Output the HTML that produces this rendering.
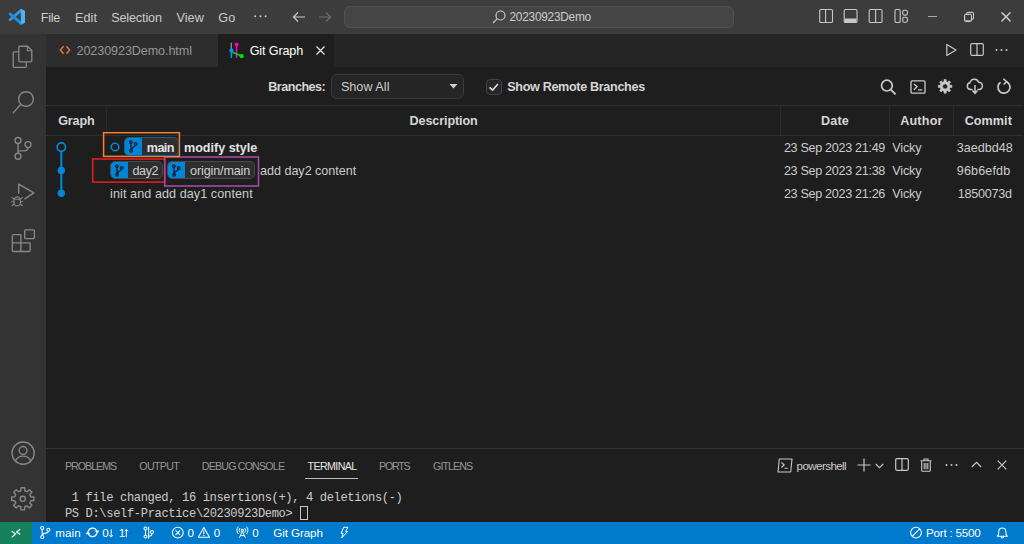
<!DOCTYPE html>
<html><head><meta charset="utf-8">
<style>
*{box-sizing:border-box;margin:0;padding:0}
html,body{width:1024px;height:544px;overflow:hidden;background:#1e1e1e;font-family:"Liberation Sans",sans-serif;color:#ccc;font-size:13px}
.abs{position:absolute}
.x{position:absolute;white-space:pre;line-height:1}
#title{left:0;top:0;width:1024px;height:34px;background:#3c3c3c}
#act{left:0;top:34px;width:46px;height:488px;background:#333333}
#tabs{left:46px;top:34px;width:978px;height:33px;background:#252526}
.tab{position:absolute;top:0;height:33px;font-size:13px;line-height:33px;white-space:nowrap}
#status{left:0;top:522px;width:1024px;height:22px;background:#007acc;color:#fff;font-size:12px;line-height:22px}
#remote{left:0;top:0;width:32px;height:22px;background:#16825d}
.t{position:absolute;white-space:nowrap}
.menu{position:absolute;top:0;line-height:35px;font-size:13px;color:#cccccc}
.b{font-weight:bold}
.hdr{position:absolute;top:109px;height:26px;line-height:25px;font-weight:bold;color:#d8d8d8;font-size:13px;text-align:center}
.row{position:absolute;font-size:13px;color:#cccccc;white-space:nowrap;line-height:23px;height:23px}
.ref{position:absolute;height:18px;border:1px solid #4a4a4a;border-radius:5px;background:#2e2e2e;overflow:hidden}
.ref .ic{position:absolute;left:0;top:0;width:17px;height:18px;background:#0085d9}
.ref .nm{position:absolute;left:22px;top:0;line-height:16px;font-size:13px;color:#d4d4d4;white-space:nowrap}
.pt{position:absolute;top:454px;line-height:24px;font-size:11px;color:#969696;white-space:nowrap}
.mono{font-family:"Liberation Mono",monospace;font-size:13.2px;color:#cccccc;white-space:pre;position:absolute;line-height:16px}
</style></head><body>

<!-- TITLE BAR -->
<div id="title" class="abs">
  <svg class="abs" style="left:0;top:0" width="34" height="34" viewBox="0 0 34 34"><path d="M10.100 19.700 21.200 10.200" stroke="#2c9bea" stroke-width="2.800" stroke-linecap="round"/><path d="M10.100 13.900 21.200 23.400" stroke="#1f8fde" stroke-width="2.800" stroke-linecap="round"/><path d="M20.700 8.800 24.300 10.700a1 1 0 0 1 .7 1V22a1 1 0 0 1-.7 1L20.700 24.800z" fill="#43a8f2"/><path d="M21.800 9.600 24.300 10.700a1 1 0 0 1 .7 1V22a1 1 0 0 1-.7 1L21.800 24.100z" fill="#54b2f6"/></svg>
  
  
  
  
  
  
  <svg class="abs" style="left:253px;top:14px" width="15" height="4" viewBox="0 0 15 4" fill="#cccccc"><circle cx="2.200" cy="2.200" r="1"/><circle cx="7.400" cy="2.200" r="1"/><circle cx="12.600" cy="2.200" r="1"/></svg>
  <svg class="abs" style="left:291px;top:9px" width="16" height="16" viewBox="0 0 16 16"><path d="M14 8H2.5M7 3.5 2.5 8 7 12.5" stroke="#ccc" stroke-width="1.2" fill="none"/></svg>
  <svg class="abs" style="left:317px;top:9px" width="16" height="16" viewBox="0 0 16 16"><path d="M2 8h11.5M9 3.5 13.5 8 9 12.5" stroke="#6e6e6e" stroke-width="1.2" fill="none"/></svg>
  <div class="abs" style="left:344px;top:6px;width:390px;height:22px;border:1px solid #525252;border-radius:6px;background:#454545"></div>
  <svg class="abs" style="left:491px;top:9px" width="16" height="16" viewBox="0 0 16 16"><circle cx="9.5" cy="6.5" r="4.5" stroke="#ccc" stroke-width="1.2" fill="none"/><path d="M6.3 9.7 2 14" stroke="#ccc" stroke-width="1.2"/></svg>
  
  <!-- layout icons -->
  <svg class="abs" style="left:800px;top:0" width="224" height="34" viewBox="800 0 224 34" fill="none" stroke="#c8c8c8" stroke-width="1.100">
  <rect x="819.700" y="9.500" width="12.800" height="13" rx="1.300"/><path d="M825.600 9.500v13"/>
  <rect x="844.200" y="9.500" width="12.800" height="13" rx="1.300"/><path d="M844.700 18.500h11.800v3.500h-11.800z" fill="#c8c8c8" stroke="none"/>
  <rect x="869.200" y="9.500" width="12.800" height="13" rx="1.300"/><path d="M875.600 9.500v13"/>
  <rect x="895" y="9.500" width="5.200" height="13" rx="1.300"/><rect x="902.700" y="10.200" width="4.700" height="4.900" rx="1.500"/><rect x="902.700" y="17.300" width="4.700" height="4.900" rx="1.500"/>
  <path d="M928 16.500h9" stroke="#b4b4b4" stroke-width="0.900"/>
  <g stroke="#b4b4b4" stroke-width="0.900"><rect x="964.800" y="14.200" width="6.600" height="6.300" rx="1"/><path d="M966.800 14v-0.700a1 1 0 0 1 1-1h4.700a1 1 0 0 1 1 1v4.400a1 1 0 0 1-1 1h-0.900"/></g>
  <path d="M1002 12.300l8.200 8.300M1010.200 12.300l-8.200 8.300" stroke="#d0d0d0" stroke-width="0.950"/>
  </svg>
</div>
  <svg class="abs" style="left:963px;top:11px" width="12" height="12" viewBox="0 0 12 12"><rect x="1.500" y="3.500" width="7" height="7" rx="1" stroke="#ccc" fill="none"/><path d="M3.500 3.500v-1a1 1 0 0 1 1-1h5a1 1 0 0 1 1 1v5a1 1 0 0 1-1 1h-1" stroke="#ccc" fill="none"/></svg>
  <svg class="abs" style="left:1000px;top:11px" width="12" height="12" viewBox="0 0 12 12"><path d="M1.500 1.500l9 9M10.500 1.500l-9 9" stroke="#ccc" stroke-width="1.100"/></svg>
</div>

<!-- ACTIVITY BAR -->
<div id="act" class="abs"></div>
<svg class="abs" style="left:0;top:34px" width="46" height="488" viewBox="0 34 46 488" fill="none" stroke="#888888" stroke-width="1.350" stroke-linejoin="round" stroke-linecap="butt">
<!-- files -->
<path d="M18.400 51.800H14.200a1 1 0 0 0-1 1V66.300a1 1 0 0 0 1 1H25.300a1 1 0 0 0 1-1V62.200"/>
<path d="M19.800 46.200H27.600L31.800 50.500V60.800a1 1 0 0 1-1 1H19.800a1 1 0 0 1-1-1V47.200a1 1 0 0 1 1-1z"/>
<path d="M27.400 46.400V50.700H31.600" stroke-width="1.100"/>
<!-- search -->
<circle cx="26" cy="99" r="7.300"/><path d="M20.600 104.500 12.900 113.400"/>
<!-- scm -->
<circle cx="18" cy="140.500" r="3"/><circle cx="18" cy="156.200" r="3"/><circle cx="28" cy="144.600" r="3"/>
<path d="M18 143.500V153.200M28 147.600c0 2.400-1.800 3.300-4.200 3.300H18"/>
<!-- debug -->
<path d="M18.700 193.800V184.200L33.800 192.900 24.400 199.100"/>
<ellipse cx="17.200" cy="201.400" rx="3.300" ry="4.500" stroke-width="1.200"/>
<path d="M14.200 199.300H20.200M11.300 201.700H13.800M20.600 201.700H23.100M11.700 197.200 14 199.200M22.700 197.200 20.400 199.200M11.700 206 14 204M22.700 206 20.400 204" stroke-width="1.100"/>
<!-- extensions -->
<rect x="24.700" y="229.900" width="9.700" height="8.700" rx="1"/>
<path d="M12.300 234.600H20.900V242.900H30.100V250.500a1 1 0 0 1-1 1H13.300a1 1 0 0 1-1-1V235.600"/>
<path d="M20.900 242.900V251.500M12.300 242.900H20.900"/>
<!-- account -->
<circle cx="23.100" cy="453.100" r="11.100"/><circle cx="23.100" cy="450.400" r="3.900"/>
<path d="M15.300 461.200c1.300-3.400 4.300-5.100 7.800-5.100s6.500 1.700 7.800 5.100"/>
<!-- gear -->
<path d="M20.82 490.84 L20.96 487.75 L24.64 487.75 L24.78 490.84 L27.03 491.77 L29.31 489.69 L31.91 492.29 L29.83 494.57 L30.76 496.82 L33.85 496.96 L33.85 500.64 L30.76 500.78 L29.83 503.03 L31.91 505.31 L29.31 507.91 L27.03 505.83 L24.78 506.76 L24.64 509.85 L20.96 509.85 L20.82 506.76 L18.57 505.83 L16.29 507.91 L13.69 505.31 L15.77 503.03 L14.84 500.78 L11.75 500.64 L11.75 496.96 L14.84 496.82 L15.77 494.57 L13.69 492.29 L16.29 489.69 L18.57 491.77Z" stroke-width="1.400"/><circle cx="22.800" cy="498.800" r="2.600" stroke-width="1.400"/>
</svg>

<!-- TABS -->
<div id="tabs" class="abs">
  <div class="tab" style="left:0;width:172px;background:#2d2d2d;color:#969696"></div>
  <div class="tab" style="left:172px;width:116px;background:#1e1e1e;color:#ffffff"></div>
</div>



<svg class="abs" style="left:59px;top:44px" width="12" height="12" viewBox="0 0 12 12" fill="none" stroke="#e37933" stroke-width="1.400"><path d="M4.600 2.300 1.300 6l3.300 3.700M7.400 2.300 10.700 6 7.400 9.700"/></svg>
<svg class="abs" style="left:226px;top:40px" width="20" height="22" viewBox="226 40 20 22"><path d="M231.300 42.800V49" stroke="#8a8a8a" stroke-width="1.400"/><path d="M231.400 50.600V58" stroke="#0098ff" stroke-width="1.500"/><path d="M236.600 44.400V58" stroke="#ff00b4" stroke-width="1.500"/><path d="M232.500 52.200 241.500 56" stroke="#00de00" stroke-width="1.500"/><circle cx="231.400" cy="50.600" r="2.100" fill="#0098ff"/><circle cx="236.600" cy="44.400" r="2" fill="#ff00b4"/><circle cx="241.700" cy="56.200" r="2.100" fill="#00de00"/></svg>
<svg class="abs" style="left:316px;top:46px" width="9" height="9" viewBox="0 0 9 9"><path d="M0.500 0.500l8 8M8.500 0.500l-8 8" stroke="#e8e8e8" stroke-width="1.200"/></svg>
<!-- editor actions -->
<svg class="abs" style="left:945px;top:43px" width="13" height="14" viewBox="0 0 13 14" fill="none" stroke="#c8c8c8" stroke-width="1.200" stroke-linejoin="round"><path d="M1.800 1.500v11L11 7z"/></svg>
<svg class="abs" style="left:970px;top:43px" width="14" height="13" viewBox="0 0 14 13" fill="none" stroke="#c8c8c8" stroke-width="1.200"><rect x="0.700" y="0.700" width="12.600" height="11.600" rx="1.200"/><path d="M7 0.700v11.600"/></svg>
<svg class="abs" style="left:995px;top:48px" width="13" height="4" viewBox="0 0 13 4" fill="#c8c8c8"><circle cx="1.500" cy="2" r="1"/><circle cx="6.500" cy="2" r="1"/><circle cx="11.500" cy="2" r="1"/></svg>
<!-- panel actions -->
<svg class="abs" style="left:777px;top:458px" width="16" height="15" viewBox="0 0 16 15" fill="none" stroke="#c8c8c8" stroke-width="1.100" stroke-linejoin="round"><path d="M2.300 1h12.700l-1.300 13H1z"/><path d="M4.500 4.500 7.200 7 4.300 9.500M7.500 10.300h3.200"/></svg>
<svg class="abs" style="left:857px;top:457.500px" width="14" height="14" viewBox="0 0 14 14" stroke="#c8c8c8" stroke-width="1.200"><path d="M7 0.500v13M0.500 7h13"/></svg>
<svg class="abs" style="left:875px;top:463px" width="9" height="6" viewBox="0 0 9 6" fill="none" stroke="#c8c8c8" stroke-width="1.100"><path d="M0.800 1 4.500 4.700 8.200 1"/></svg>
<svg class="abs" style="left:895px;top:458px" width="14" height="13" viewBox="0 0 14 13" fill="none" stroke="#c8c8c8" stroke-width="1.200"><rect x="0.700" y="0.700" width="12.600" height="11.600" rx="1.200"/><path d="M7 0.700v11.600"/></svg>
<svg class="abs" style="left:920px;top:458px" width="12" height="14" viewBox="0 0 12 14" fill="none" stroke="#c8c8c8" stroke-width="1.100"><path d="M0.500 2.800h11M4 2.600V1h4v1.600M1.700 3v9.500a0.800 0.800 0 0 0 .8.800h7a0.800 0.800 0 0 0 .8-.8V3M4.200 5v6.300M6 5v6.300M7.800 5v6.300"/></svg>
<svg class="abs" style="left:945px;top:463px" width="13" height="4" viewBox="0 0 13 4" fill="#c8c8c8"><circle cx="1.500" cy="2" r="1"/><circle cx="6.500" cy="2" r="1"/><circle cx="11.500" cy="2" r="1"/></svg>
<svg class="abs" style="left:971px;top:461px" width="11" height="7" viewBox="0 0 11 7" fill="none" stroke="#c8c8c8" stroke-width="1.200"><path d="M0.800 6 5.500 1.300 10.200 6"/></svg>
<svg class="abs" style="left:997px;top:460px" width="10" height="10" viewBox="0 0 10 10"><path d="M0.700 0.700l8.600 8.600M9.300 0.700l-8.600 8.600" stroke="#c8c8c8" stroke-width="1.200"/></svg>

<!-- GIT GRAPH CONTROLS -->

<div class="abs" style="left:331px;top:74px;width:133px;height:25px;border:1px solid #3a3a3a;border-radius:6px;background:#252525"></div>

<svg class="abs" style="left:449px;top:84px" width="9" height="5" viewBox="0 0 9 5"><path d="M0.500 0h8L4.500 4.500z" fill="#d0d0d0"/></svg>
<div class="abs" style="left:486px;top:79px;width:16px;height:16px;border:1px solid #424242;border-radius:4px;background:#272727"></div>
<svg class="abs" style="left:488px;top:82px" width="12" height="11" viewBox="0 0 12 11"><path d="M1.600 5.300 4.600 8.200 9.900 2" stroke="#e4e4e4" stroke-width="1.600" fill="none"/></svg>


<!-- right icons of git graph -->
<svg class="abs" style="left:879px;top:78px" width="18" height="18" viewBox="0 0 18 18" fill="none" stroke="#c8c8c8" stroke-width="1.700"><circle cx="7.900" cy="7.600" r="5.400"/><path d="M11.800 11.600 16.600 16.400" stroke-width="2"/></svg>
<svg class="abs" style="left:909.500px;top:79.500px" width="16" height="14" viewBox="0 0 17 15" fill="none" stroke="#c8c8c8" stroke-width="1.400"><rect x="1" y="1" width="15" height="13" rx="1"/><path d="M4.200 4.200 7.400 7.300 4.200 10.400M8.500 10.600h4.500" stroke-width="1.500"/></svg>
<svg class="abs" style="left:930px;top:72px" width="30" height="30" viewBox="930 72 30 30"><path d="M943.93 81.54 L944.02 79.58 L946.18 79.58 L946.27 81.54 L947.71 82.14 L949.16 80.82 L950.68 82.34 L949.36 83.79 L949.96 85.23 L951.92 85.32 L951.92 87.48 L949.96 87.57 L949.36 89.01 L950.68 90.46 L949.16 91.98 L947.71 90.66 L946.27 91.26 L946.18 93.22 L944.02 93.22 L943.93 91.26 L942.49 90.66 L941.04 91.98 L939.52 90.46 L940.84 89.01 L940.24 87.57 L938.28 87.48 L938.28 85.32 L940.24 85.23 L940.84 83.79 L939.52 82.34 L941.04 80.82 L942.49 82.14Z M942.60 86.400a2.500 2.500 0 1 0 5 0a2.500 2.500 0 1 0 -5 0z" fill="#c8c8c8" fill-rule="evenodd" stroke="#c8c8c8" stroke-width="0.600" stroke-linejoin="round"/></svg>
<svg class="abs" style="left:966px;top:78px" width="18" height="17" viewBox="0 0 18 17" fill="none" stroke="#c8c8c8" stroke-width="1.400"><path d="M6.500 11.500H4.500a3.400 3.400 0 0 1-.6-6.700 4.600 4.600 0 0 1 8.800-.6 3.700 3.700 0 0 1 .8 7.300H11.500"/><path d="M9 7v8M6.500 12.500 9 15.300l2.500-2.800" stroke-width="1.500"/></svg>
<svg class="abs" style="left:996px;top:78px" width="16" height="17" viewBox="0 0 16 17" fill="none" stroke="#c8c8c8" stroke-width="1.700"><path d="M10.200 3.600A6 6 0 1 1 4.500 4.300"/><path d="M7.300 0.800 10.600 3.500 7.600 6.600" stroke-width="1.500"/></svg>

<!-- TABLE -->
<div class="abs" style="left:46px;top:105px;width:977px;height:1px;background:#303030"></div>
<div class="abs" style="left:46px;top:135px;width:977px;height:1px;background:#303030"></div>
<div class="abs" style="left:106px;top:105px;width:1px;height:30px;background:#2a2a2a"></div>
<div class="abs" style="left:780px;top:105px;width:1px;height:30px;background:#2a2a2a"></div>
<div class="abs" style="left:889px;top:105px;width:1px;height:30px;background:#2a2a2a"></div>
<div class="abs" style="left:953px;top:105px;width:1px;height:30px;background:#2a2a2a"></div>

<!-- graph -->
<svg class="abs" style="left:46px;top:136px" width="60" height="72" viewBox="0 0 60 72"><path d="M15.300 11V57.200" stroke="#0085d9" stroke-width="2.100"/><circle cx="15.300" cy="11.100" r="4.200" fill="#1e1e1e" stroke="#0085d9" stroke-width="1.700"/><circle cx="15.300" cy="34.500" r="3.700" fill="#0085d9"/><circle cx="15.300" cy="57.200" r="3.700" fill="#0085d9"/></svg>

<!-- annotations -->
<svg class="abs" style="left:80px;top:125px" width="200" height="70" viewBox="80 125 200 70" fill="none">
<rect x="92.700" y="159" width="72" height="23.100" stroke="#ed1c24" stroke-width="1.500"/>
<rect x="164.700" y="157" width="93.800" height="29" stroke="#a349a4" stroke-width="1.600"/>
<rect x="103.600" y="132.700" width="75.800" height="23.700" stroke="#ff7f27" stroke-width="1.500"/>
</svg>

<!-- row 1 -->
<svg class="abs" style="left:109px;top:141px" width="12" height="12" viewBox="0 0 12 12"><circle cx="6" cy="6" r="3.800" fill="none" stroke="#0085d9" stroke-width="1.600"/></svg>
<div class="ref" style="left:124px;top:137px;width:55px;height:19px;border-color:#1b5f8c"><div class="ic"></div><svg class="abs" style="left:3px;top:1px" width="12" height="14" viewBox="0 0 12 14" fill="none" stroke="#14212d" stroke-width="1.300"><circle cx="2.900" cy="3.200" r="1.300"/><circle cx="3.100" cy="11.800" r="1.300"/><circle cx="7.700" cy="5" r="1.300"/><path d="M2.900 4.500 3.100 10.500M7.400 6.300C6.500 8.600 3.600 8.300 3.100 10.300"/></svg></div>

<!-- row 2 -->
<div class="ref" style="left:110px;top:161px;width:53px"><div class="ic"></div><svg class="abs" style="left:3px;top:1px" width="12" height="14" viewBox="0 0 12 14" fill="none" stroke="#14212d" stroke-width="1.300"><circle cx="2.900" cy="3.200" r="1.300"/><circle cx="3.100" cy="11.800" r="1.300"/><circle cx="7.700" cy="5" r="1.300"/><path d="M2.900 4.500 3.100 10.500M7.400 6.300C6.500 8.600 3.600 8.300 3.100 10.300"/></svg></div>
<div class="ref" style="left:167px;top:161px;width:88px"><div class="ic"></div><svg class="abs" style="left:3px;top:1px" width="12" height="14" viewBox="0 0 12 14" fill="none" stroke="#14212d" stroke-width="1.300"><circle cx="2.900" cy="3.200" r="1.300"/><circle cx="3.100" cy="11.800" r="1.300"/><circle cx="7.700" cy="5" r="1.300"/><path d="M2.900 4.500 3.100 10.500M7.400 6.300C6.500 8.600 3.600 8.300 3.100 10.300"/></svg></div>

<!-- row 3 -->


<!-- right cols -->




<!-- PANEL -->
<div class="abs" style="left:46px;top:448px;width:978px;height:1px;background:#333"></div>




<div class="abs" style="left:305px;top:478px;width:53px;height:1px;background:#bdbdbd"></div>




<div class="abs" style="left:300px;top:506px;width:8px;height:14px;border:1px solid #c8c8c8"></div>

<!-- STATUS -->
<div id="status" class="abs"><div id="remote" class="abs"></div></div>
<svg class="abs" style="left:0;top:522px" width="1024" height="22" viewBox="0 522 1024 22" fill="none" stroke="#ffffff" stroke-width="1.050" stroke-linejoin="round">
<path d="M11.700 531.200 15.700 533.900 11.700 537.400M20.200 529.200 16.600 532 20.200 534.600" stroke-width="1.200"/>
<circle cx="42.200" cy="528.100" r="1.550"/><circle cx="42.200" cy="537" r="1.550"/><circle cx="48.400" cy="529.800" r="1.550"/>
<path d="M42.200 529.700V535.400M48.400 531.400c0 2.600-6.200 1.400-6.200 3.600"/>
<path d="M88.200 531.400A4.500 4.500 0 0 1 96.600 530.800M96.800 533.500A4.500 4.500 0 0 1 88.400 534.100" stroke-width="1.200"/>
<path d="M95.200 530.800h3.800l-1.900 2.800zM86 534.100h3.800l-1.900-2.800z" fill="#fff" stroke-width="0.400"/>
<path d="M111.200 529.300V537M109.500 535.200 111.200 537.100 112.900 535.200M126.300 537.200V529.500M124.600 531.300 126.300 529.400 128 531.300" stroke-width="1"/>
<circle cx="145.500" cy="528.400" r="1.500"/><circle cx="145.500" cy="536.500" r="1.500"/><circle cx="152" cy="531.900" r="1.500"/>
<path d="M145.500 530V534.900M148.700 526.700V538.800M152 533.500c0 1.800-1.300 2.700-3.300 2.700"/>
<circle cx="177.800" cy="532.600" r="5.400"/><path d="M175.600 530.400l4.400 4.400M180 530.400l-4.400 4.400"/>
<path d="M203.900 527.400 209.500 537.200H198.300z"/><path d="M203.900 530.600V534.200M203.900 535v1.100" stroke-width="1.100"/>
<circle cx="242.400" cy="530.300" r="1.100"/><path d="M242.400 531.500 239.400 537.700M242.400 531.500 245.400 537.700M240.400 535.600H244.400M240.100 528a3.300 3.300 0 0 0 0 4.600M244.700 528a3.300 3.300 0 0 1 0 4.600M238.300 526.700a5.300 5.300 0 0 0 0 7.200M246.500 526.700a5.300 5.300 0 0 1 0 7.200" stroke-width="1"/>
<path d="M343.700 527.300H347.900L345.600 531.500H347.600L341.700 537.900 343.100 533.300H341.100z" stroke-width="1"/>
<circle cx="916" cy="532.600" r="5.400"/><path d="M919.800 528.800 912.200 536.400"/>
<path d="M997.300 536.200H1007.300c-1.300-1.100-1.500-2-1.500-4.800a3.500 3.500 0 0 0-7 0c0 2.800-.2 3.700-1.500 4.800zM1001.200 536.700a1.200 1.200 0 0 0 2.400 0"/>
</svg>
<span class="x" style="left:40.70px;top:11.93px;font-family:'Liberation Sans',sans-serif;font-size:12.6px;font-weight:400;color:#cccccc;letter-spacing:-0.246px">File</span>
<span class="x" style="left:75.00px;top:11.93px;font-family:'Liberation Sans',sans-serif;font-size:12.6px;font-weight:400;color:#cccccc;letter-spacing:0.086px">Edit</span>
<span class="x" style="left:111.20px;top:11.93px;font-family:'Liberation Sans',sans-serif;font-size:12.6px;font-weight:400;color:#cccccc;letter-spacing:-0.132px">Selection</span>
<span class="x" style="left:176.50px;top:11.93px;font-family:'Liberation Sans',sans-serif;font-size:12.6px;font-weight:400;color:#cccccc;letter-spacing:0.061px">View</span>
<span class="x" style="left:218.20px;top:11.93px;font-family:'Liberation Sans',sans-serif;font-size:12.6px;font-weight:400;color:#cccccc;letter-spacing:0.248px">Go</span>
<span class="x" style="left:509.52px;top:11.53px;font-family:'Liberation Sans',sans-serif;font-size:11.9px;font-weight:400;color:#cccccc;letter-spacing:-0.267px">20230923Demo</span>
<span class="x" style="left:76.50px;top:44.83px;font-family:'Liberation Sans',sans-serif;font-size:12.6px;font-weight:400;color:#969696;letter-spacing:-0.091px">20230923Demo.html</span>
<span class="x" style="left:249.70px;top:44.93px;font-family:'Liberation Sans',sans-serif;font-size:12.6px;font-weight:400;color:#ffffff;letter-spacing:-0.129px">Git Graph</span>
<span class="x" style="left:268.30px;top:80.93px;font-family:'Liberation Sans',sans-serif;font-size:12.6px;font-weight:700;color:#d6d6d6;letter-spacing:-0.517px">Branches:</span>
<span class="x" style="left:340.90px;top:80.93px;font-family:'Liberation Sans',sans-serif;font-size:12.6px;font-weight:400;color:#cccccc;letter-spacing:0.035px">Show All</span>
<span class="x" style="left:507.20px;top:80.93px;font-family:'Liberation Sans',sans-serif;font-size:12.6px;font-weight:700;color:#d6d6d6;letter-spacing:-0.327px">Show Remote Branches</span>
<span class="x" style="left:58.20px;top:115.33px;font-family:'Liberation Sans',sans-serif;font-size:12.6px;font-weight:700;color:#d6d6d6;letter-spacing:-0.158px">Graph</span>
<span class="x" style="left:409.50px;top:115.33px;font-family:'Liberation Sans',sans-serif;font-size:12.6px;font-weight:700;color:#d6d6d6;letter-spacing:-0.102px">Description</span>
<span class="x" style="left:821.10px;top:115.33px;font-family:'Liberation Sans',sans-serif;font-size:12.6px;font-weight:700;color:#d6d6d6;letter-spacing:0.154px">Date</span>
<span class="x" style="left:900.20px;top:115.33px;font-family:'Liberation Sans',sans-serif;font-size:12.6px;font-weight:700;color:#d6d6d6;letter-spacing:0.196px">Author</span>
<span class="x" style="left:964.70px;top:115.33px;font-family:'Liberation Sans',sans-serif;font-size:12.6px;font-weight:700;color:#d6d6d6;letter-spacing:0.054px">Commit</span>
<span class="x" style="left:146.80px;top:141.63px;font-family:'Liberation Sans',sans-serif;font-size:12.6px;font-weight:700;color:#e2e2e2;letter-spacing:-0.615px">main</span>
<span class="x" style="left:184.00px;top:141.63px;font-family:'Liberation Sans',sans-serif;font-size:12.6px;font-weight:700;color:#e2e2e2;letter-spacing:-0.020px">modify style</span>
<span class="x" style="left:132.50px;top:164.63px;font-family:'Liberation Sans',sans-serif;font-size:12.6px;font-weight:400;color:#d0d0d0;letter-spacing:-0.417px">day2</span>
<span class="x" style="left:190.10px;top:164.63px;font-family:'Liberation Sans',sans-serif;font-size:12.6px;font-weight:400;color:#d0d0d0;letter-spacing:-0.145px">origin/main</span>
<span class="x" style="left:260.00px;top:164.63px;font-family:'Liberation Sans',sans-serif;font-size:12.6px;font-weight:400;color:#cccccc;letter-spacing:-0.025px">add day2 content</span>
<span class="x" style="left:110.10px;top:188.03px;font-family:'Liberation Sans',sans-serif;font-size:12.6px;font-weight:400;color:#cccccc;letter-spacing:0.075px">init and add day1 content</span>
<span class="x" style="left:783.90px;top:141.63px;font-family:'Liberation Sans',sans-serif;font-size:12.6px;font-weight:400;color:#cccccc;letter-spacing:-0.312px">23 Sep 2023 21:49</span>
<span class="x" style="left:783.90px;top:164.63px;font-family:'Liberation Sans',sans-serif;font-size:12.6px;font-weight:400;color:#cccccc;letter-spacing:-0.312px">23 Sep 2023 21:38</span>
<span class="x" style="left:783.90px;top:188.03px;font-family:'Liberation Sans',sans-serif;font-size:12.6px;font-weight:400;color:#cccccc;letter-spacing:-0.312px">23 Sep 2023 21:26</span>
<span class="x" style="left:892.30px;top:141.63px;font-family:'Liberation Sans',sans-serif;font-size:12.6px;font-weight:400;color:#cccccc;letter-spacing:-0.154px">Vicky</span>
<span class="x" style="left:892.30px;top:164.63px;font-family:'Liberation Sans',sans-serif;font-size:12.6px;font-weight:400;color:#cccccc;letter-spacing:-0.154px">Vicky</span>
<span class="x" style="left:892.30px;top:188.03px;font-family:'Liberation Sans',sans-serif;font-size:12.6px;font-weight:400;color:#cccccc;letter-spacing:-0.154px">Vicky</span>
<span class="x" style="left:956.80px;top:141.63px;font-family:'Liberation Sans',sans-serif;font-size:12.6px;font-weight:400;color:#cccccc;letter-spacing:-0.027px">3aedbd48</span>
<span class="x" style="left:956.80px;top:164.63px;font-family:'Liberation Sans',sans-serif;font-size:12.6px;font-weight:400;color:#cccccc;letter-spacing:0.133px">96b6efdb</span>
<span class="x" style="left:957.80px;top:188.03px;font-family:'Liberation Sans',sans-serif;font-size:12.6px;font-weight:400;color:#cccccc;letter-spacing:-0.270px">1850073d</span>
<span class="x" style="left:64.97px;top:460.94px;font-family:'Liberation Sans',sans-serif;font-size:10.7px;font-weight:400;color:#969696;letter-spacing:-1.019px">PROBLEMS</span>
<span class="x" style="left:139.27px;top:460.94px;font-family:'Liberation Sans',sans-serif;font-size:10.7px;font-weight:400;color:#969696;letter-spacing:-0.693px">OUTPUT</span>
<span class="x" style="left:201.77px;top:460.94px;font-family:'Liberation Sans',sans-serif;font-size:10.7px;font-weight:400;color:#969696;letter-spacing:-0.832px">DEBUG CONSOLE</span>
<span class="x" style="left:307.47px;top:460.94px;font-family:'Liberation Sans',sans-serif;font-size:10.7px;font-weight:400;color:#e7e7e7;letter-spacing:-0.611px">TERMINAL</span>
<span class="x" style="left:379.07px;top:460.94px;font-family:'Liberation Sans',sans-serif;font-size:10.7px;font-weight:400;color:#969696;letter-spacing:-1.264px">PORTS</span>
<span class="x" style="left:433.07px;top:460.94px;font-family:'Liberation Sans',sans-serif;font-size:10.7px;font-weight:400;color:#969696;letter-spacing:-0.944px">GITLENS</span>
<span class="x" style="left:796.54px;top:459.98px;font-family:'Liberation Sans',sans-serif;font-size:11.6px;font-weight:400;color:#cccccc;letter-spacing:-0.585px">powershell</span>
<span class="x" style="left:64.92px;top:492.03px;font-family:'Liberation Mono',monospace;font-size:12.1px;font-weight:400;color:#cccccc;letter-spacing:-0.368px"> 1 file changed, 16 insertions(+), 4 deletions(-)</span>
<span class="x" style="left:64.92px;top:507.63px;font-family:'Liberation Mono',monospace;font-size:12.1px;font-weight:400;color:#cccccc;letter-spacing:-0.364px">PS D:\self-Practice\20230923Demo&gt;</span>
<span class="x" style="left:55.24px;top:527.18px;font-family:'Liberation Sans',sans-serif;font-size:11.6px;font-weight:400;color:#ffffff;letter-spacing:0.140px">main</span>
<span class="x" style="left:102.14px;top:527.18px;font-family:'Liberation Sans',sans-serif;font-size:11.6px;font-weight:400;color:#ffffff;letter-spacing:0.000px">0</span>
<span class="x" style="left:118.74px;top:527.18px;font-family:'Liberation Sans',sans-serif;font-size:11.6px;font-weight:400;color:#ffffff;letter-spacing:0.000px">1</span>
<span class="x" style="left:187.44px;top:527.18px;font-family:'Liberation Sans',sans-serif;font-size:11.6px;font-weight:400;color:#ffffff;letter-spacing:0.000px">0</span>
<span class="x" style="left:213.74px;top:527.18px;font-family:'Liberation Sans',sans-serif;font-size:11.6px;font-weight:400;color:#ffffff;letter-spacing:0.000px">0</span>
<span class="x" style="left:252.24px;top:527.18px;font-family:'Liberation Sans',sans-serif;font-size:11.6px;font-weight:400;color:#ffffff;letter-spacing:0.000px">0</span>
<span class="x" style="left:273.24px;top:527.18px;font-family:'Liberation Sans',sans-serif;font-size:11.6px;font-weight:400;color:#ffffff;letter-spacing:-0.076px">Git Graph</span>
<span class="x" style="left:926.04px;top:526.78px;font-family:'Liberation Sans',sans-serif;font-size:11.6px;font-weight:400;color:#ffffff;letter-spacing:-0.206px">Port : 5500</span>
</body></html>
